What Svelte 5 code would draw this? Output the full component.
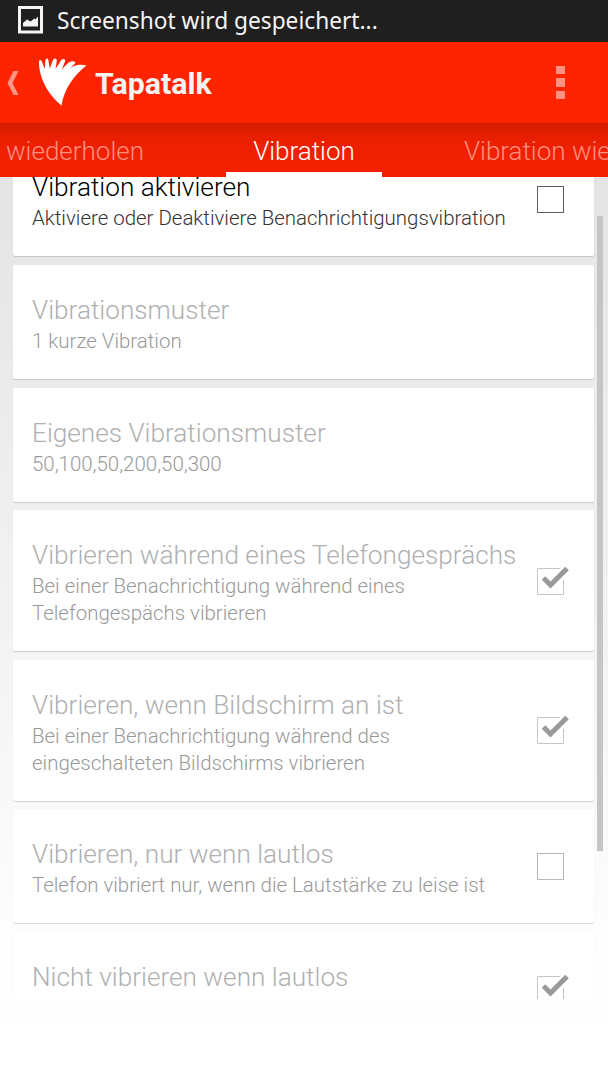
<script>
  let settings = $state([
    {
      title: 'Vibration aktivieren',
      summary: ['Aktiviere oder Deaktiviere Benachrichtigungsvibration'],
      checked: false,
      enabled: true,
    },
    { title: 'Vibrationsmuster', summary: ['1 kurze Vibration'] },
    { title: 'Eigenes Vibrationsmuster', summary: ['50,100,50,200,50,300'] },
    {
      title: 'Vibrieren während eines Telefongesprächs',
      summary: [
        'Bei einer Benachrichtigung während eines',
        'Telefongespächs vibrieren',
      ],
      checked: true,
    },
    {
      title: 'Vibrieren, wenn Bildschirm an ist',
      summary: [
        'Bei einer Benachrichtigung während des',
        'eingeschalteten Bildschirms vibrieren',
      ],
      checked: true,
    },
    {
      title: 'Vibrieren, nur wenn lautlos',
      summary: ['Telefon vibriert nur, wenn die Lautstärke zu leise ist'],
      checked: false,
    },
    { title: 'Nicht vibrieren wenn lautlos', summary: [''], checked: true },
  ]);

  function toggle(item) {
    if (item.enabled) item.checked = !item.checked;
  }
</script>

<div class="screen">
  <div class="status">
    <svg width="26" height="28" viewBox="0 0 26 28">
      <rect x="1.5" y="1.5" width="22" height="24.5" fill="none" stroke="#f4f4f4" stroke-width="3" />
      <path d="M5 20.5V17l4-3.500 3.500 2 4-3 1 1 2.500-3v10z" fill="#f4f4f4" />
    </svg>
    <span>Screenshot wird gespeichert...</span>
  </div>

  <header>
    <svg class="back" width="12" height="24" viewBox="0 0 12 24">
      <path d="M6.500 0h5L5.500 12l6 12h-5L.5 12z" fill="#ff9588" />
    </svg>
    <svg class="logo" width="48" height="48" viewBox="0 0 48 48">
      <path
        d="M22.500 47.500C12 39 0 23 0 4C0 1 2.500 1.500 3 4L5.800 11L6.300 3C6.800-.5 9.500 0 9.500 3L10.800 10.500L13.800 2.500C15-.5 18 0 17.800 3L16.500 11L21.300 3.500C23-.3 26.800.5 26 3.500L22.800 11.500L28 6C31 2.500 35.500 2.500 36.500 4.800L30.500 11C35 6.500 41 6 47.500 7.500C35 17 25 31 22.500 47.500z"
        fill="#fff"
      />
    </svg>
    <h1>Tapatalk</h1>
    <button class="menu" aria-label="Menü">
      <i></i><i></i><i></i>
    </button>
  </header>

  <nav>
    <span class="tab prev">wiederholen</span>
    <span class="tab active">Vibration</span>
    <span class="tab next">Vibration wiederholen</span>
  </nav>

  <main>
    <div class="list">
      {#each settings as item}
        <section class="card" class:enabled={item.enabled}>
          <div class="text">
            <h2>{item.title}</h2>
            {#each item.summary as line}
              <p>{line}</p>
            {/each}
          </div>
          {#if item.checked !== undefined}
            <button class="check" aria-label={item.title} onclick={() => toggle(item)}>
              <svg width="34" height="30" viewBox="0 0 34 30">
                {#if item.checked}
                  <path d="M23 2.500H.5v26h26V14" fill="none" stroke="#c6c6c6" />
                  <path d="M6.500 12l7 7L30 2.500" fill="none" stroke="#999" stroke-width="5" />
                {:else}
                  <rect class="box" x=".5" y="2.500" width="26" height="26" fill="none" />
                {/if}
              </svg>
            </button>
          {/if}
        </section>
      {/each}
    </div>
    <div class="scrollbar"></div>
  </main>
</div>

<style>
  :global(body) {
    margin: 0;
    background: #fff;
  }

  .screen {
    width: 608px;
    height: 1080px;
    overflow: hidden;
    display: flex;
    flex-direction: column;
    font-family: Roboto, 'Liberation Sans', sans-serif;
    font-weight: 300;
    background: linear-gradient(#e4e4e4 177px, #f2f2f2 600px, #fdfdfd 930px, #fff 1050px);
  }

  .status {
    flex: none;
    display: flex;
    align-items: center;
    gap: 13px;
    height: 42px;
    box-sizing: border-box;
    padding: 0 0 2px 18px;
    background: #1f1f1f;
    color: #f4f4f4;
    font: 400 22.700px 'Noto Sans', 'Open Sans', sans-serif;
    white-space: nowrap;
  }

  header {
    flex: none;
    display: flex;
    align-items: center;
    height: 81px;
    padding-left: 7px;
    background: #ff2400;
    color: #f4f4f4;
  }

  .logo {
    margin: 0 0 2px 20px;
  }

  h1 {
    flex: 1;
    margin: 2px 0 0 8px;
    font-size: 30.300px;
    font-weight: 700;
  }

  button {
    padding: 0;
    border: 0;
    background: none;
  }

  .menu {
    display: flex;
    flex-direction: column;
    gap: 4px;
    margin-right: 43px;
  }

  .menu i {
    width: 9px;
    height: 8.600px;
    background: #ff9183;
  }

  nav {
    flex: none;
    display: flex;
    height: 54px;
    overflow: hidden;
    background: linear-gradient(#cb1c00, #d91e00 2px, #e91f00 16px, #f32100 38px);
    color: #ff9081;
    font-size: 26px;
    line-height: 56px;
    white-space: nowrap;
  }

  .tab {
    flex: none;
    box-sizing: border-box;
  }

  .prev {
    width: 226px;
    padding-left: 6px;
  }

  .active {
    width: 156px;
    text-align: center;
    color: #fff;
    border-bottom: 5px solid #fff;
  }

  .next {
    padding-left: 82px;
  }

  main {
    flex: none;
    display: flex;
    justify-content: space-between;
    height: 822px;
    overflow: hidden;
  }

  .list {
    display: flex;
    flex-direction: column;
    gap: 8.600px;
    width: 581px;
    margin: -34.600px 0 0 13px;
  }

  .card {
    flex: none;
    display: flex;
    justify-content: space-between;
    align-items: center;
    box-sizing: border-box;
    padding: 0 23px 0 19px;
    background: #fff;
    border-radius: 2px;
    box-shadow: 0 1px 1px rgba(0, 0, 0, 0.15);
    color: #b0b0b0;
  }

  .text {
    padding: 30px 0 24px;
    white-space: nowrap;
  }

  h2 {
    margin: 0 0 2px;
    font-size: 26.200px;
    font-weight: 300;
    line-height: 31px;
  }

  p {
    height: 27px;
    margin: 0;
    color: #999;
    font-size: 20.450px;
    line-height: 27px;
  }

  .enabled h2 {
    color: #000;
  }

  .enabled p {
    color: #333;
  }

  .check svg {
    display: block;
  }

  .box {
    stroke: #b8b8b8;
  }

  .enabled .box {
    stroke: #5c5c5c;
  }

  .scrollbar {
    width: 6px;
    height: 635px;
    margin: 39px 5px 0 0;
    background: #c5c5c5;
  }
</style>
